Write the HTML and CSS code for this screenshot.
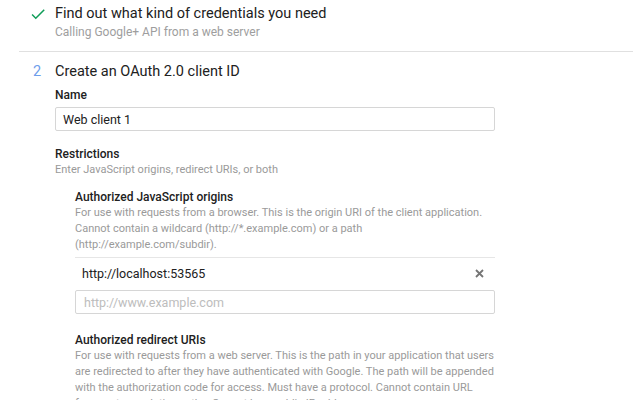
FILE: index.html
```html
<!DOCTYPE html>
<html>
<head>
<meta charset="utf-8">
<link rel="stylesheet" href="styles.css">
</head>
<body>
<div class="page">
  <div class="step step-done">
    <div class="marker">
      <svg class="check" width="18" height="18" viewBox="0 0 24 24"><path d="M9 16.17L4.83 12l-1.42 1.41L9 19 21 7l-1.41-1.41z" fill="#0f9d58"/></svg>
    </div>
    <div class="step-body">
      <div class="step-title">Find out what kind of credentials you need</div>
      <div class="step-sub">Calling Google+ API from a web server</div>
    </div>
  </div>
  <div class="step step-current">
    <div class="marker num">2</div>
    <div class="step-body">
      <div class="step-title">Create an OAuth 2.0 client ID</div>
      <div class="field">
        <div class="label">Name</div>
        <div class="input"><span class="value">Web client 1</span></div>
      </div>
      <div class="field restrictions">
        <div class="label">Restrictions</div>
        <div class="help">Enter JavaScript origins, redirect URIs, or both</div>
      </div>
      <div class="sub">
        <div class="label">Authorized JavaScript origins</div>
        <div class="help">For use with requests from a browser. This is the origin URI of the client application. Cannot contain a wildcard (http://*.example.com) or a path (http://example.com/subdir).</div>
        <div class="list">
          <div class="list-row">
            <span class="uri">http://localhost:53565</span>
            <svg class="close" width="9" height="9" viewBox="0 0 9 9"><path d="M1 1L8 8M8 1L1 8" stroke="#757575" stroke-width="1.8"/></svg>
          </div>
          <div class="input input-sm"><span class="placeholder">http://www.example.com</span></div>
        </div>
      </div>
      <div class="sub sub-redirect">
        <div class="label">Authorized redirect URIs</div>
        <div class="help">For use with requests from a web server. This is the path in your application that users are redirected to after they have authenticated with Google. The path will be appended with the authorization code for access. Must have a protocol. Cannot contain URL fragments or relative paths. Cannot be a public IP address.</div>
      </div>
    </div>
  </div>
</div>
</body>
</html>
```

FILE: styles.css
```css
html, body {
  margin: 0;
  padding: 0;
  background: #fff;
}
body {
  font-family: Roboto, "Liberation Sans", sans-serif;
  color: #212121;
}
.page {
  padding-left: 19px;
}
.step {
  display: flex;
}
.step-done {
  padding-top: 4px;
  padding-bottom: 11px;
  border-bottom: 1px solid #e0e0e0;
}
.step-current {
  padding-top: 10px;
}
.marker {
  width: 36px;
  flex: none;
  box-sizing: border-box;
  padding-left: 12px;
}
.check {
  display: block;
  margin-top: 1px;
  margin-left: -2px;
}
.num {
  font-size: 14.5px;
  line-height: 20px;
  color: #6d9eeb;
  padding-left: 14px;
}
.step-body {
  flex: 1;
  min-width: 0;
}
.step-title {
  font-size: 14.5px;
  line-height: 20px;
  color: #212121;
}
.step-sub {
  font-size: 12px;
  line-height: 16px;
  color: #9e9e9e;
}
.field {
  width: 440px;
}
.label {
  font-size: 12px;
  line-height: 16px;
  font-weight: 500;
  color: #212121;
}
.field .label {
  margin-top: 5px;
}
.input {
  box-sizing: border-box;
  height: 24px;
  margin-top: 4px;
  border: 1px solid #d6d6d6;
  border-radius: 2px;
  padding: 0 7px;
  display: flex;
  align-items: center;
}
.value {
  font-size: 12.5px;
  color: #212121;
}
.restrictions {
  margin-top: 15px;
}
.help {
  font-size: 11px;
  line-height: 16px;
  color: #9a9a9a;
}
.sub {
  margin-left: 20px;
  width: 420px;
  margin-top: 11px;
}
.list {
  margin-top: 4px;
  border-top: 1px solid #e6e6e6;
}
.list-row {
  display: flex;
  align-items: center;
  justify-content: space-between;
  height: 28px;
  padding: 3px 11px 0 7px;
  box-sizing: border-box;
}
.uri {
  font-size: 12.5px;
  color: #212121;
}
.close {
  display: block;
}
.input-sm {
  margin-top: 4px;
  height: 24px;
  padding-left: 8px;
}
.placeholder {
  font-size: 12.5px;
  color: #bdbdbd;
}
.sub-redirect {
  margin-top: 18px;
}
```
